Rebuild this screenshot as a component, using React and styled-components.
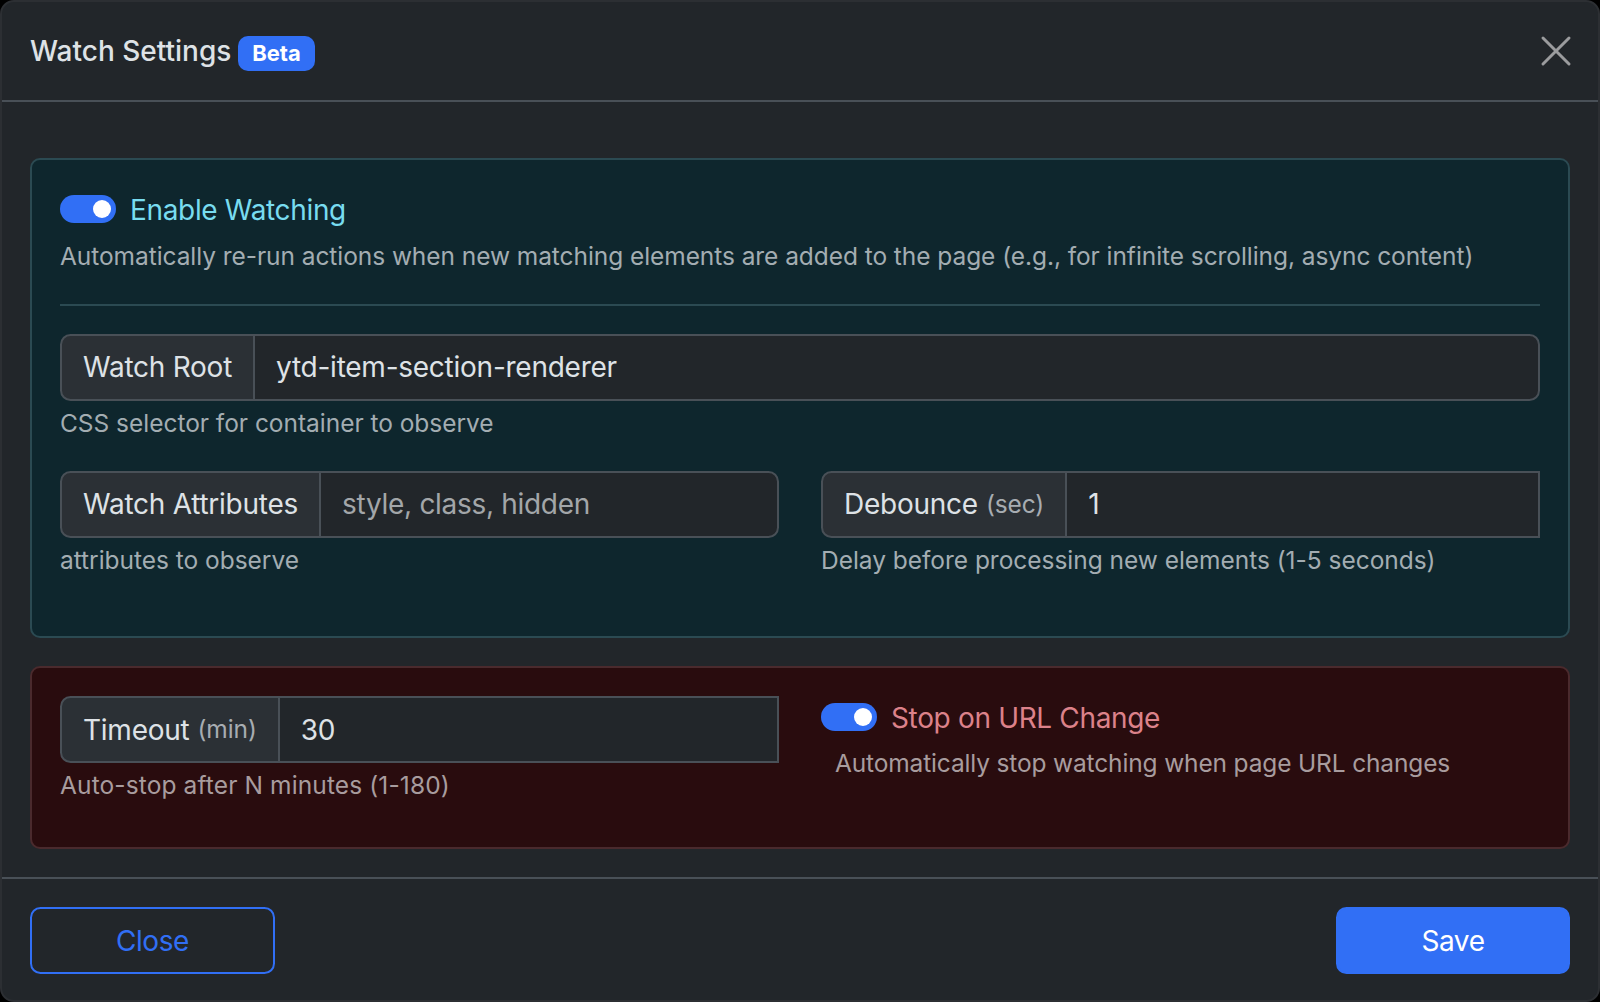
import React from 'react';
import styled, { createGlobalStyle } from 'styled-components';

const GlobalStyle = createGlobalStyle`
  * {
    box-sizing: border-box;
  }

  html, body {
    margin: 0;
    padding: 0;
    background: #000000;
  }

  body {
    font-family: Inter, "Liberation Sans", sans-serif;
    font-size: 28px;
    line-height: 1.5;
    color: #dee2e6;
  }
`;

const Modal = styled.div`
  width: 1600px;
  height: 1002px;
  display: flex;
  flex-direction: column;
  background-color: #22262a;
  border: 2px solid #2c2f33;
  border-radius: 14px;
  overflow: hidden;
`;

const Header = styled.header`
  height: 100px;
  flex: none;
  display: flex;
  align-items: center;
  justify-content: space-between;
  padding: 0 28px;
  border-bottom: 2px solid #495057;
`;

const Title = styled.h5`
  display: flex;
  align-items: center;
  gap: 7px;
  margin: 0;
  font-size: 28px;
  font-weight: 500;
  line-height: 42px;
  color: #dee2e6;
`;

const Badge = styled.span`
  display: inline-block;
  padding: 0 14px;
  height: 35px;
  margin-top: 4px;
  font-size: 22px;
  font-weight: 700;
  line-height: 35px;
  letter-spacing: -0.1px;
  color: #ffffff;
  background-color: #316ff5;
  border-radius: 10px;
`;

const CloseIcon = styled.button`
  display: flex;
  padding: 0;
  margin-right: -2px;
  background: none;
  border: none;
  color: #9b9c9e;
  cursor: pointer;
`;

const Body = styled.main`
  flex: 1;
  display: flex;
  flex-direction: column;
  gap: 28px;
  padding: 56px 28px 28px;
`;

const Panel = styled.section`
  padding: 28px;
  border: 2px solid ${props => (props.$tone === 'danger' ? '#4a2a2d' : '#2b4a52')};
  border-radius: 10px;
  background-color: ${props => (props.$tone === 'danger' ? '#290c0e' : '#0e262d')};
  height: ${props => props.$height}px;
`;

const SwitchRow = styled.label`
  display: flex;
  align-items: center;
  gap: 14px;
  height: 42px;
  letter-spacing: -0.34px;
  color: ${props => (props.$tone === 'danger' ? '#dc828a' : '#78dcf0')};
  cursor: pointer;
`;

const SwitchText = styled.span`
  padding-top: 1px;
`;

const Track = styled.span`
  position: relative;
  display: block;
  width: 56px;
  height: 28px;
  flex: none;
  background-color: #316ff5;
  border-radius: 14px;

  &::after {
    content: '';
    position: absolute;
    top: 5px;
    right: 5px;
    width: 18px;
    height: 18px;
    border-radius: 50%;
    background-color: #ffffff;
  }
`;

const Description = styled.p`
  margin: ${props => (props.$tone === 'danger' ? '7px' : '8px')} 0 0;
  padding-left: ${props => (props.$indent ? '14px' : '0')};
  font-size: 24.5px;
  line-height: 36.75px;
  letter-spacing: ${props => (props.$tone === 'danger' ? '-0.15px' : '-0.066px')};
  color: ${props => (props.$tone === 'danger' ? '#a89c9e' : '#a3adb2')};
`;

const Divider = styled.hr`
  height: 2px;
  margin: 29px 0 28px;
  border: none;
  background-color: #2b4a52;
`;

const Field = styled.div`
  margin-bottom: ${props => (props.$last ? '0' : '29px')};
`;

const InputGroup = styled.div`
  display: flex;
  height: 67px;
`;

const GroupLabel = styled.span`
  display: flex;
  align-items: center;
  gap: 8px;
  flex: none;
  padding: 0 21px;
  letter-spacing: -0.25px;
  background-color: #2b3035;
  border: 2px solid #495057;
  border-radius: 10.5px 0 0 10.5px;
  white-space: nowrap;
`;

const Unit = styled.small`
  font-size: 24.5px;
  letter-spacing: -0.1px;
  color: #a7acb1;
`;

const Input = styled.input`
  flex: 1;
  min-width: 0;
  margin-left: -2px;
  padding: 0 21px;
  font: inherit;
  letter-spacing: -0.25px;
  color: #dee2e6;
  background-color: #22262a;
  border: 2px solid #495057;
  border-radius: ${props => (props.$square ? '0' : '0 10.5px 10.5px 0')};
  outline: none;

  &::placeholder {
    letter-spacing: -0.3px;
    color: #a3a6a9;
    opacity: 1;
  }
`;

const Help = styled.div`
  margin-top: 4px;
  font-size: 24.5px;
  line-height: 36.75px;
  letter-spacing: ${props => (props.$tone === 'danger' ? '0.12px' : '-0.03px')};
  color: ${props => (props.$tone === 'danger' ? '#a89c9e' : '#a3adb2')};
`;

const Columns = styled.div`
  display: grid;
  grid-template-columns: 719px 719px;
  column-gap: 42px;
`;

const Footer = styled.footer`
  height: 123px;
  flex: none;
  display: flex;
  align-items: flex-start;
  justify-content: space-between;
  padding: 28px 28px 0;
  border-top: 2px solid #495057;
`;

const Button = styled.button`
  width: ${props => props.$width}px;
  height: 67px;
  padding: 0;
  font: inherit;
  letter-spacing: -0.4px;
  color: ${props => (props.$primary ? '#ffffff' : '#316ff5')};
  background-color: ${props => (props.$primary ? '#316ff5' : 'transparent')};
  border: 2px solid #316ff5;
  border-radius: 10.5px;
  cursor: pointer;
`;

const Switch = ({ tone, children }) => (
  <SwitchRow $tone={tone}>
    <Track />
    <SwitchText>{children}</SwitchText>
  </SwitchRow>
);

const App = () => (
  <>
    <GlobalStyle />
    <Modal>
      <Header>
        <Title>
          Watch Settings <Badge>Beta</Badge>
        </Title>
        <CloseIcon aria-label="Close">
          <svg width="32" height="32" viewBox="0 0 32 32" fill="none" stroke="currentColor" strokeWidth="3" strokeLinecap="round">
            <path d="M3 3 L29 29 M29 3 L3 29" />
          </svg>
        </CloseIcon>
      </Header>
      <Body>
        <Panel $height={480}>
          <Switch>Enable Watching</Switch>
          <Description>
            Automatically re-run actions when new matching elements are added to the page (e.g., for infinite scrolling, async content)
          </Description>
          <Divider />
          <Field>
            <InputGroup>
              <GroupLabel>Watch Root</GroupLabel>
              <Input defaultValue="ytd-item-section-renderer" />
            </InputGroup>
            <Help>CSS selector for container to observe</Help>
          </Field>
          <Columns>
            <Field $last>
              <InputGroup>
                <GroupLabel>Watch Attributes</GroupLabel>
                <Input placeholder="style, class, hidden" />
              </InputGroup>
              <Help>attributes to observe</Help>
            </Field>
            <Field $last>
              <InputGroup>
                <GroupLabel>
                  Debounce <Unit>(sec)</Unit>
                </GroupLabel>
                <Input $square defaultValue="1" />
              </InputGroup>
              <Help>Delay before processing new elements (1-5 seconds)</Help>
            </Field>
          </Columns>
        </Panel>
        <Panel $tone="danger" $height={183}>
          <Columns>
            <Field $last>
              <InputGroup>
                <GroupLabel>
                  Timeout <Unit>(min)</Unit>
                </GroupLabel>
                <Input $square defaultValue="30" />
              </InputGroup>
              <Help $tone="danger">Auto-stop after N minutes (1-180)</Help>
            </Field>
            <div>
              <Switch tone="danger">Stop on URL Change</Switch>
              <Description $indent $tone="danger">
                Automatically stop watching when page URL changes
              </Description>
            </div>
          </Columns>
        </Panel>
      </Body>
      <Footer>
        <Button $width={245}>Close</Button>
        <Button $primary $width={234}>Save</Button>
      </Footer>
    </Modal>
  </>
);

export default App;
